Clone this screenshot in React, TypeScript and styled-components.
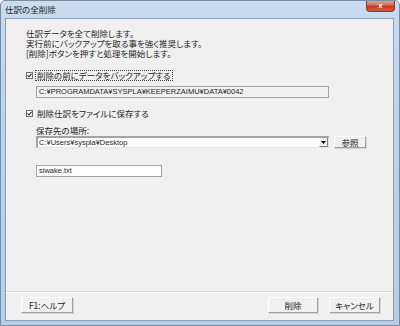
import styled, { createGlobalStyle } from "styled-components";

const GlobalStyle = createGlobalStyle`
  html, body {
    margin: 0;
    padding: 0;
    background: #ffffff;
  }
  body {
    font-family: "Noto Sans CJK JP", "Liberation Sans", sans-serif;
    font-feature-settings: "palt";
    color: #262626;
  }
`;

const Window = styled.div`
  width: 400px;
  height: 326px;
  box-sizing: border-box;
  display: flex;
  flex-direction: column;
  background: linear-gradient(180deg, #c9dcf0 0%, #bad2ec 40%, #b4cde9 100%);
  border: 1px solid #7a8ca3;
  border-radius: 5px 5px 0 0;
  overflow: hidden;
`;

const TitleBar = styled.div`
  height: 17px;
  display: flex;
  align-items: flex-start;
  justify-content: space-between;
  padding-left: 4px;
  padding-right: 4px;
`;

const Title = styled.span`
  font-size: 8.5px;
  line-height: 17px;
  color: #1e1e1e;
`;

const CloseButton = styled.div`
  width: 27px;
  height: 11px;
  margin-top: -1px;
  display: flex;
  align-items: center;
  justify-content: center;
  background: linear-gradient(180deg, #e9a99c 0%, #d9705e 45%, #c13b24 55%, #cf5a3f 100%);
  border: 1px solid #8c3a2c;
  border-top: none;
  border-radius: 0 0 4px 4px;
  color: #ffffff;
  font-family: "Liberation Sans", sans-serif;
  font-weight: bold;
  font-size: 8px;
  line-height: 1;
`;

const Client = styled.div`
  flex: 1;
  margin: 0 5px 4px 4px;
  display: flex;
  flex-direction: column;
  background: #f0f0f0;
  border: 1px solid #8d9db2;
`;

const Body = styled.div`
  flex: 1;
  padding: 9px 0 0 20px;
  display: flex;
  flex-direction: column;
`;

const Intro = styled.p`
  margin: 0;
  font-size: 8.5px;
  line-height: 10px;
  white-space: nowrap;
`;

const CheckRow = styled.label<{ $top: number }>`
  margin-top: ${(p) => p.$top}px;
  height: 10px;
  display: flex;
  align-items: center;
  gap: 3px;
`;

const CheckBox = styled.span`
  width: 7px;
  height: 7px;
  box-sizing: border-box;
  border: 1px solid #6f6f6f;
  background: #ffffff;
  display: flex;
  align-items: center;
  justify-content: center;
`;

const CheckText = styled.span<{ $focused?: boolean }>`
  font-size: 8.5px;
  line-height: 9px;
  padding: 0 1px;
  outline: ${(p) => (p.$focused ? "1px dotted #404040" : "none")};
  white-space: nowrap;
`;

const Indent = styled.div<{ $top: number }>`
  margin-top: ${(p) => p.$top}px;
  margin-left: 10px;
  display: flex;
  align-items: center;
`;

const FieldLabel = styled.span`
  font-size: 8.5px;
  line-height: 10px;
  white-space: nowrap;
`;

const TextBox = styled.div<{ $width: number; $readOnly?: boolean }>`
  width: ${(p) => p.$width}px;
  height: 12px;
  box-sizing: border-box;
  border: 1px solid #a3a3a3;
  background: ${(p) => (p.$readOnly ? "#f0f0f0" : "#ffffff")};
  padding-left: 2px;
  font-family: "Liberation Sans", sans-serif;
  font-feature-settings: normal;
  font-size: 7.5px;
  line-height: 10px;
  white-space: nowrap;
  overflow: hidden;
`;

const Combo = styled.div`
  width: 293px;
  height: 12px;
  box-sizing: border-box;
  display: flex;
  background: #ffffff;
  border: 1px solid #a3a3a3;
  border-top-width: 2px;
  border-left-width: 2px;
  border-right-color: #e3e3e3;
  border-bottom-color: #e3e3e3;
`;

const ComboText = styled.span`
  flex: 1;
  padding-left: 1px;
  font-family: "Liberation Sans", sans-serif;
  font-size: 7.5px;
  line-height: 9px;
  white-space: nowrap;
`;

const ComboArrow = styled.span`
  width: 9px;
  box-sizing: border-box;
  display: flex;
  align-items: center;
  justify-content: center;
  background: #f0f0f0;
  border-left: 1px solid #ffffff;
  border-right: 1px solid #808080;
  border-bottom: 1px solid #808080;
`;

const Button = styled.div<{ $width: number; $height?: number }>`
  width: ${(p) => p.$width}px;
  height: ${(p) => p.$height ?? 16}px;
  box-sizing: border-box;
  display: flex;
  align-items: center;
  justify-content: center;
  background: #f0f0f0;
  border: 1px solid;
  border-color: #ffffff #a0a0a0 #a0a0a0 #ffffff;
  box-shadow: 1px 1px 0 #d4d4d4;
  font-size: 8.5px;
  line-height: 1;
  color: #222222;
  white-space: nowrap;
`;

const Footer = styled.div`
  border-top: 1px solid #d4d8dd;
  box-shadow: inset 0 1px 0 #ffffff;
  padding: 5px 13px 7px 15px;
  display: flex;
  align-items: center;
`;

const Spacer = styled.div<{ $size?: number }>`
  flex: ${(p) => (p.$size ? `0 0 ${p.$size}px` : "1")};
`;

const Check = () => (
  <svg width="5" height="5" viewBox="0 0 5 5">
    <path d="M0.5 2.3 L2 3.8 L4.5 0.8" stroke="#1a1a1a" strokeWidth="1.1" fill="none" />
  </svg>
);

export default function App() {
  return (
    <>
      <GlobalStyle />
      <Window>
        <TitleBar>
          <Title>仕訳の全削除</Title>
          <CloseButton>x</CloseButton>
        </TitleBar>
        <Client>
          <Body>
            <Intro>
              仕訳データを全て削除します。
              <br />
              実行前にバックアップを取る事を強く推奨します。
              <br />
              [削除]ボタンを押すと処理を開始します。
            </Intro>

            <CheckRow $top={12}>
              <CheckBox>
                <Check />
              </CheckBox>
              <CheckText $focused>削除の前にデータをバックアップする</CheckText>
            </CheckRow>
            <Indent $top={6}>
              <TextBox $width={293} $readOnly>
                C:¥PROGRAMDATA¥SYSPLA¥KEEPERZAIMU¥DATA¥0042
              </TextBox>
            </Indent>

            <CheckRow $top={10}>
              <CheckBox>
                <Check />
              </CheckBox>
              <CheckText>削除仕訳をファイルに保存する</CheckText>
            </CheckRow>
            <Indent $top={7}>
              <FieldLabel>保存先の場所:</FieldLabel>
            </Indent>
            <Indent $top={1}>
              <Combo>
                <ComboText>C:¥Users¥syspla¥Desktop</ComboText>
                <ComboArrow>
                  <svg width="5" height="3" viewBox="0 0 5 3">
                    <path d="M0 0 H5 L2.5 3 Z" fill="#000" />
                  </svg>
                </ComboArrow>
              </Combo>
              <Spacer $size={5} />
              <Button $width={32} $height={12}>
                参照
              </Button>
            </Indent>
            <Indent $top={17}>
              <TextBox $width={126}>siwake.txt</TextBox>
            </Indent>
          </Body>
          <Footer>
            <Button $width={52}>F1:ヘルプ</Button>
            <Spacer />
            <Button $width={50}>削除</Button>
            <Spacer $size={11} />
            <Button $width={51}>キャンセル</Button>
          </Footer>
        </Client>
      </Window>
    </>
  );
}
